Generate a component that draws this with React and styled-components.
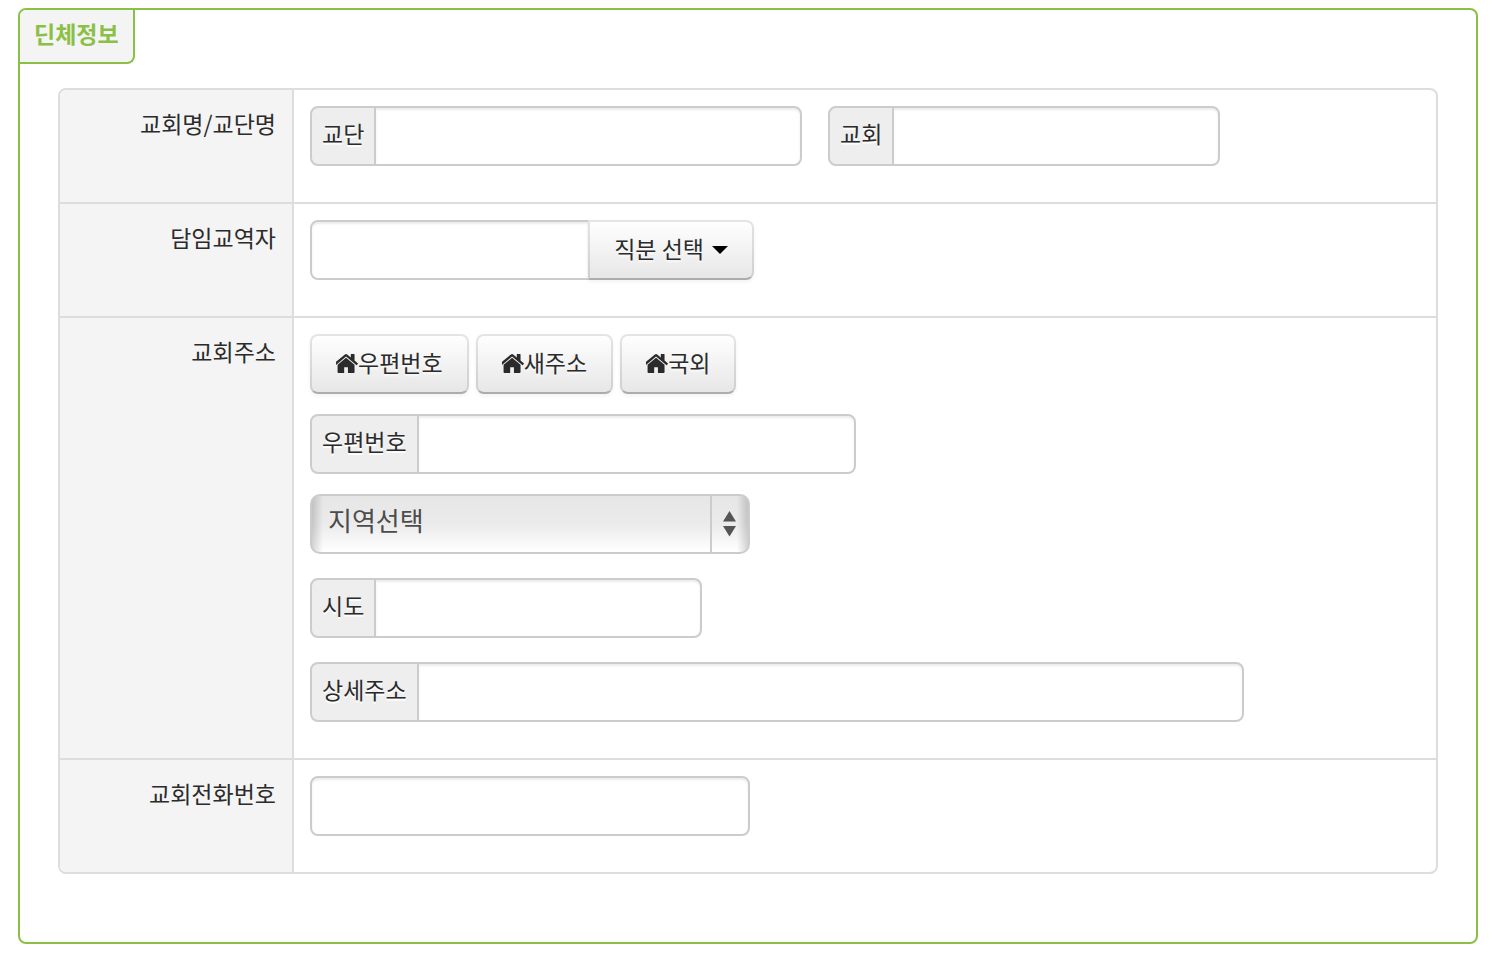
import React from "react";
import styled, { createGlobalStyle, css } from "styled-components";

const GlobalStyle = createGlobalStyle`
  *, *::before, *::after {
    box-sizing: border-box;
  }
  body {
    margin: 0;
    background: #fff;
    color: #2b2b2b;
    font-family: "Noto Sans CJK KR", "Noto Sans", sans-serif;
    font-size: 23px;
    line-height: 34px;
  }
  button, input, select {
    font: inherit;
    color: inherit;
  }
`;

const Panel = styled.section`
  margin: 8px 14px 10px 18px;
  padding-bottom: 68px;
  border: 2px solid #8bc046;
  border-radius: 8px;
`;
const PanelTitle = styled.h2`
  width: fit-content;
  height: 54px;
  margin: 0 0 24px;
  padding: 6px 14px 0;
  border: solid #8bc046;
  border-width: 0 2px 2px 0;
  border-radius: 6px 0 8px 0;
  background: #f4f4f4;
  color: #8bc046;
  font-size: 23px;
  font-weight: 700;
`;
const Rows = styled.div`
  margin: 0 38px;
  border: 2px solid #ddd;
  border-radius: 8px;
  overflow: hidden;
`;
const Row = styled.div`
  display: grid;
  grid-template-columns: 232px 1fr;

  & + & {
    border-top: 2px solid #ddd;
  }
`;
const RowLabel = styled.div`
  padding: 16px;
  background: #f4f4f4;
  text-align: right;
`;
const RowBody = styled.div`
  padding: 16px 16px 36px;
  border-left: 2px solid #ddd;
`;
const Stack = styled.div`
  display: flex;
  flex-direction: column;
  gap: ${({ $gap }) => $gap}px;
`;
const Line = styled.div`
  display: flex;
  flex-wrap: wrap;
  gap: ${({ $gap }) => $gap}px;
`;
const Group = styled.div`
  display: flex;
  width: ${({ $width }) => $width}px;
  max-width: 100%;
`;
const AddOn = styled.label`
  flex: none;
  height: 60px;
  padding: 8px 10px 0;
  border: 2px solid #ccc;
  border-radius: 8px 0 0 8px;
  background: #eee;
  text-shadow: 0 2px 0 #fff;
`;
const TextInput = styled.input`
  flex: 1;
  min-width: 0;
  height: 60px;
  padding: 8px 12px;
  border: 2px solid #ccc;
  border-radius: 8px;
  background: #fff;
  box-shadow: inset 0 2px 2px rgba(0, 0, 0, 0.075);
  outline: none;

  ${AddOn} + & {
    margin-left: -2px;
    border-radius: 0 8px 8px 0;
  }
  ${({ $joined }) =>
    $joined &&
    css`
      border-radius: 8px 0 0 8px;
    `}
`;
const Button = styled.button`
  display: inline-flex;
  align-items: center;
  flex: none;
  height: 60px;
  padding: 0 24px 4px;
  border: 2px solid;
  border-color: rgba(0, 0, 0, 0.1) rgba(0, 0, 0, 0.1) rgba(0, 0, 0, 0.25);
  border-radius: 8px;
  background: linear-gradient(#fff, #e6e6e6) border-box;
  box-shadow: 0 2px 4px rgba(0, 0, 0, 0.05);
  text-shadow: 0 2px 2px rgba(255, 255, 255, 0.75);
  cursor: pointer;

  ${TextInput} + & {
    margin-left: -2px;
    border-radius: 0 8px 8px 0;
  }
  svg {
    margin-top: 2px;
  }
`;
const Caret = styled.span`
  margin: 4px 0 0 8px;
  border: 8px solid transparent;
  border-top-color: #000;
  border-bottom: 0;
`;
const SelectBox = styled.div`
  position: relative;
  width: 440px;
  max-width: 100%;
`;
const Select = styled.select`
  display: block;
  appearance: none;
  width: 100%;
  height: 60px;
  padding: 0 56px 8px 16px;
  border: 2px solid #ccc;
  border-radius: 10px;
  background:
    linear-gradient(
      90deg,
      rgba(0, 0, 0, 0.16),
      transparent 11px,
      transparent calc(100% - 11px),
      rgba(0, 0, 0, 0.16)
    ),
    linear-gradient(#e6e6e6, #ebebeb 50%, #fff);
  color: #4c4c4c;
  font-size: 26px;
  outline: none;
`;
const SelectArrows = styled.span`
  position: absolute;
  top: 2px;
  right: 2px;
  bottom: 2px;
  display: flex;
  align-items: center;
  width: 38px;
  padding-left: 11px;
  border-left: 2px solid #ccc;
  pointer-events: none;
`;

const HomeIcon = () => (
  <svg width="22" height="19" viewBox="150 250 1492 1290" fill="currentColor" aria-hidden="true">
    <path d="M1408 992v480q0 26-19 45t-45 19h-384v-384h-256v384h-384q-26 0-45-19t-19-45v-480q0-1 .5-3t.5-3l575-474 575 474q1 2 1 6zm223-69l-62 74q-8 9-21 11h-3q-13 0-21-7l-692-577-692 577q-12 8-24 7-13-2-21-11l-62-74q-8-10-7-23.5t11-21.5l719-599q32-26 76-26t76 26l244 204v-195q0-14 9-23t23-9h192q14 0 23 9t9 23v408l219 182q10 8 11 21.5t-7 23.5z" />
  </svg>
);

const Field = ({ id, label, width }) => (
  <Group $width={width}>
    <AddOn htmlFor={id}>{label}</AddOn>
    <TextInput id={id} type="text" />
  </Group>
);

const App = () => {
  return (
    <>
      <GlobalStyle />
      <Panel>
        <PanelTitle>딘체정보</PanelTitle>
        <Rows>
          <Row>
            <RowLabel>교회명/교단명</RowLabel>
            <RowBody>
              <Line $gap={26}>
                <Field id="denomination" label="교단" width={492} />
                <Field id="church" label="교회" width={392} />
              </Line>
            </RowBody>
          </Row>
          <Row>
            <RowLabel as="label" htmlFor="pastor">
              담임교역자
            </RowLabel>
            <RowBody>
              <Group $width={444}>
                <TextInput id="pastor" type="text" $joined />
                <Button type="button">
                  직분 선택
                  <Caret />
                </Button>
              </Group>
            </RowBody>
          </Row>
          <Row>
            <RowLabel as="label" htmlFor="region">
              교회주소
            </RowLabel>
            <RowBody>
              <Stack $gap={20}>
                <Line $gap={7}>
                  {["우편번호", "새주소", "국외"].map((text) => (
                    <Button type="button" key={text}>
                      <HomeIcon />
                      {text}
                    </Button>
                  ))}
                </Line>
                <Field id="zipcode" label="우편번호" width={546} />
                <Stack $gap={24}>
                  <SelectBox>
                    <Select id="region">
                      <option>지역선택</option>
                    </Select>
                    <SelectArrows>
                      <svg width="14" height="26" viewBox="0 0 14 26" fill="#555" aria-hidden="true">
                        <path d="M6.5 0l6.5 10.5H0zM0 15h13L6.5 25.5z" />
                      </svg>
                    </SelectArrows>
                  </SelectBox>
                  <Field id="province" label="시도" width={392} />
                  <Field id="address" label="상세주소" width={934} />
                </Stack>
              </Stack>
            </RowBody>
          </Row>
          <Row>
            <RowLabel as="label" htmlFor="phone">
              교회전화번호
            </RowLabel>
            <RowBody>
              <Group $width={440}>
                <TextInput id="phone" type="tel" />
              </Group>
            </RowBody>
          </Row>
        </Rows>
      </Panel>
    </>
  );
};

export default App;
